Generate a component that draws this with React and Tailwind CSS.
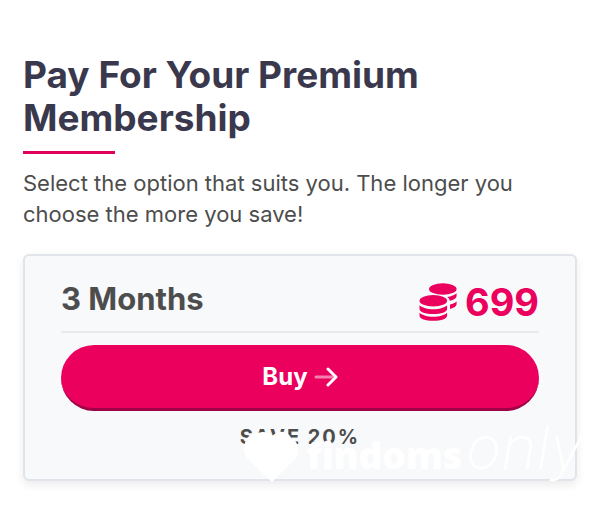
const plan = { name: '3 Months', price: 699, saving: 'SAVE 20%' }

function CoinsIcon() {
    return (
        <svg className="h-[38px] w-[38px]" viewBox="0 0 38 38" fill="currentColor" aria-hidden="true">
            <ellipse cx="23.800" cy="6" rx="13.800" ry="5.700" />
            <path d="M28.200 13.900c4-.5 7.400-1.800 9.400-3.700v2.500c0 2.300-2.800 4.200-6.800 5.100-.2-1.500-1-2.800-2.600-3.900z" />
            <path d="M31 21.600c2.800-.7 5.100-1.800 6.600-3.200v2.700c0 2.200-2.600 4-6.600 5z" />
            <ellipse cx="14.300" cy="17.700" rx="13.800" ry="5.700" />
            <path d="M.5 22.300c2.800 2.500 8 4 13.800 4s11-1.500 13.800-4v3.600c0 3-6.100 5.200-13.800 5.200S.5 28.900.5 25.900z" />
            <path d="M.5 29.700c2.800 2.500 8 4 13.800 4s11-1.500 13.800-4v3.100c0 3-6.100 5-13.800 5S.5 35.800.5 32.800z" />
        </svg>
    )
}

function ArrowIcon() {
    return (
        <svg className="h-6 w-6" viewBox="0 0 24 24" fill="none" stroke="currentColor" strokeWidth="3" strokeLinecap="round" strokeLinejoin="round" aria-hidden="true">
            <path d="M2 12h16" opacity="0.5" />
            <path d="M14 4l8 8-8 8" />
        </svg>
    )
}

// white brand mark laid over the bottom corner of the card
function Watermark() {
    return (
        <div className="pointer-events-none absolute -right-2 -bottom-1 flex items-end text-white">
            <svg className="h-[52px] w-[56px]" viewBox="0 0 56 52" fill="currentColor" aria-hidden="true">
                <path d="M30 51 6 28C1 23 1 14 5 7c3-3 7-5 11-5 6-2 10-1 14 3 4-3 7-5 11-4 5 0 7 4 9 7 7 2 7 13 4 19z" />
            </svg>
            <div className="ml-2 flex items-baseline gap-1 pb-2.5 leading-none">
                <span className="font-['Open_Sans',sans-serif] text-[37px] leading-8 font-extrabold">findoms</span>
                <span className="font-['Inter',sans-serif] text-6xl leading-[52px] font-extralight italic">only</span>
            </div>
        </div>
    )
}

export default function App() {
    return (
        <main className="px-[23px] pt-[53px] pb-6 font-['Inter',sans-serif] text-[#4d4d4d]">
            <h1 className="text-[37px] leading-[43px] font-bold text-[#3a384d]">Pay For Your Premium Membership</h1>
            <div className="mt-3 h-[3px] w-[92px] bg-[#e1005c]" />
            <p className="mt-3.5 text-[22px] leading-[31px]">Select the option that suits you. The longer you choose the more you save!</p>

            <section className="relative mt-6 rounded-md border-2 border-[#e1e4ea] bg-[#f8f9fb] px-9 pt-5 pb-6 shadow-[0_4px_10px_rgba(0,0,0,0.08)]">
                <div className="flex items-start justify-between border-b-2 border-[#e8eaed] pb-[3px]">
                    <h2 className="text-[31px] leading-[46px] font-bold">{plan.name}</h2>
                    <div className="flex items-center gap-2 text-[#eb005d]">
                        <CoinsIcon />
                        <span className="text-[38px] leading-[52px] font-bold">{plan.price}</span>
                    </div>
                </div>
                <button className="mt-3 flex h-[66px] w-full items-center justify-center gap-1.5 rounded-full border-b-3 border-[#a00045] bg-[#eb005d] text-2xl font-bold text-white">
                    Buy
                    <ArrowIcon />
                </button>
                <p className="mt-3 mb-1 text-center text-xl leading-7 font-bold tracking-widest">{plan.saving}</p>
                <Watermark />
            </section>
        </main>
    )
}
